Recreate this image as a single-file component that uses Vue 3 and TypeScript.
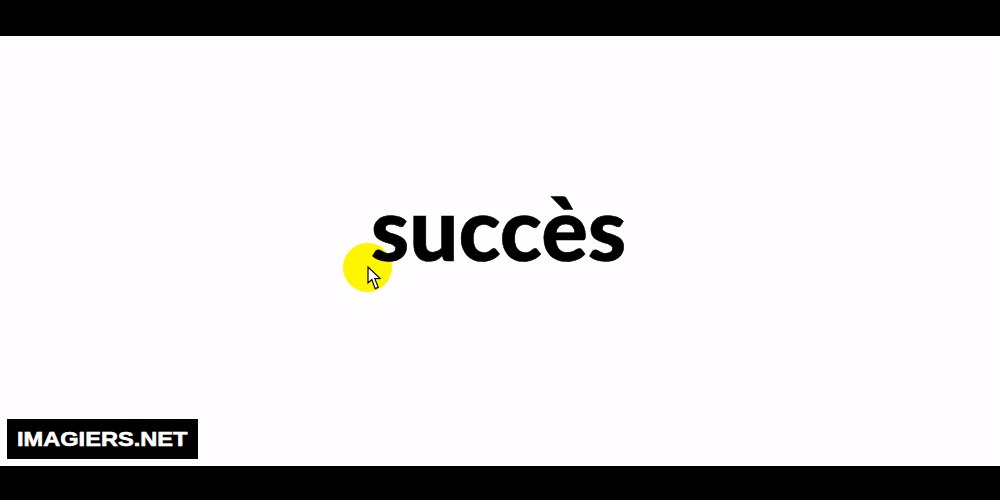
<script setup lang="ts">
const word: string = "succès";
const brand: string = "IMAGIERS.NET";
</script>

<template>
  <div class="frame">
    <div class="bar top"></div>
    <main class="stage">
      <div class="center">
        <span class="spot"></span>
        <h1 class="word">{{ word }}</h1>
        <svg class="cursor" width="15" height="24" viewBox="0 0 15 24">
          <path d="M1 1 L1 17 L4.8 13.6 L8.2 22.6 L11.2 21.4 L7.8 12.6 L13 12.4 Z" fill="#fff" stroke="#000" stroke-width="1.2" stroke-linejoin="miter" />
        </svg>
      </div>
      <div class="brand"><span class="brand-text">{{ brand }}</span></div>
    </main>
    <div class="bar bottom"></div>
  </div>
</template>

<style>
html, body { margin: 0; background: #fff; }
</style>

<style scoped>
.frame {
  width: 1000px;
  height: 500px;
  display: flex;
  flex-direction: column;
  overflow: hidden;
  background: #fffdff;
}
.bar { background: #000; flex: none; }
.top { height: 36px; }
.bottom { height: 34px; }
.stage {
  flex: 1;
  display: flex;
  flex-direction: column;
  justify-content: space-between;
  align-items: flex-start;
  padding: 0 0 7px 7px;
}
.center {
  position: relative;
  align-self: center;
  margin-top: 139px;
  margin-left: -10px;
}
.word {
  position: relative;
  margin: 0;
  font-family: Lato, sans-serif;
  font-weight: 900;
  font-size: 87px;
  line-height: 106px;
  letter-spacing: 0;
  color: #000;
  -webkit-text-stroke: 0.6px #000;
}
.spot {
  position: absolute;
  left: -28px;
  top: 68px;
  width: 49px;
  height: 49px;
  border-radius: 50%;
  background: #fff500;
}
.cursor {
  position: absolute;
  left: -4px;
  top: 91px;
}
.brand {
  width: 191px;
  height: 40px;
  background: #000;
  display: flex;
  align-items: center;
  justify-content: center;
}
.brand-text {
  color: #fff;
  font-family: "Liberation Sans", sans-serif;
  font-weight: 700;
  font-size: 20px;
  line-height: 40px;
  white-space: nowrap;
  transform: scaleX(1.18);
  -webkit-text-stroke: 0.6px #fff;
}
</style>
